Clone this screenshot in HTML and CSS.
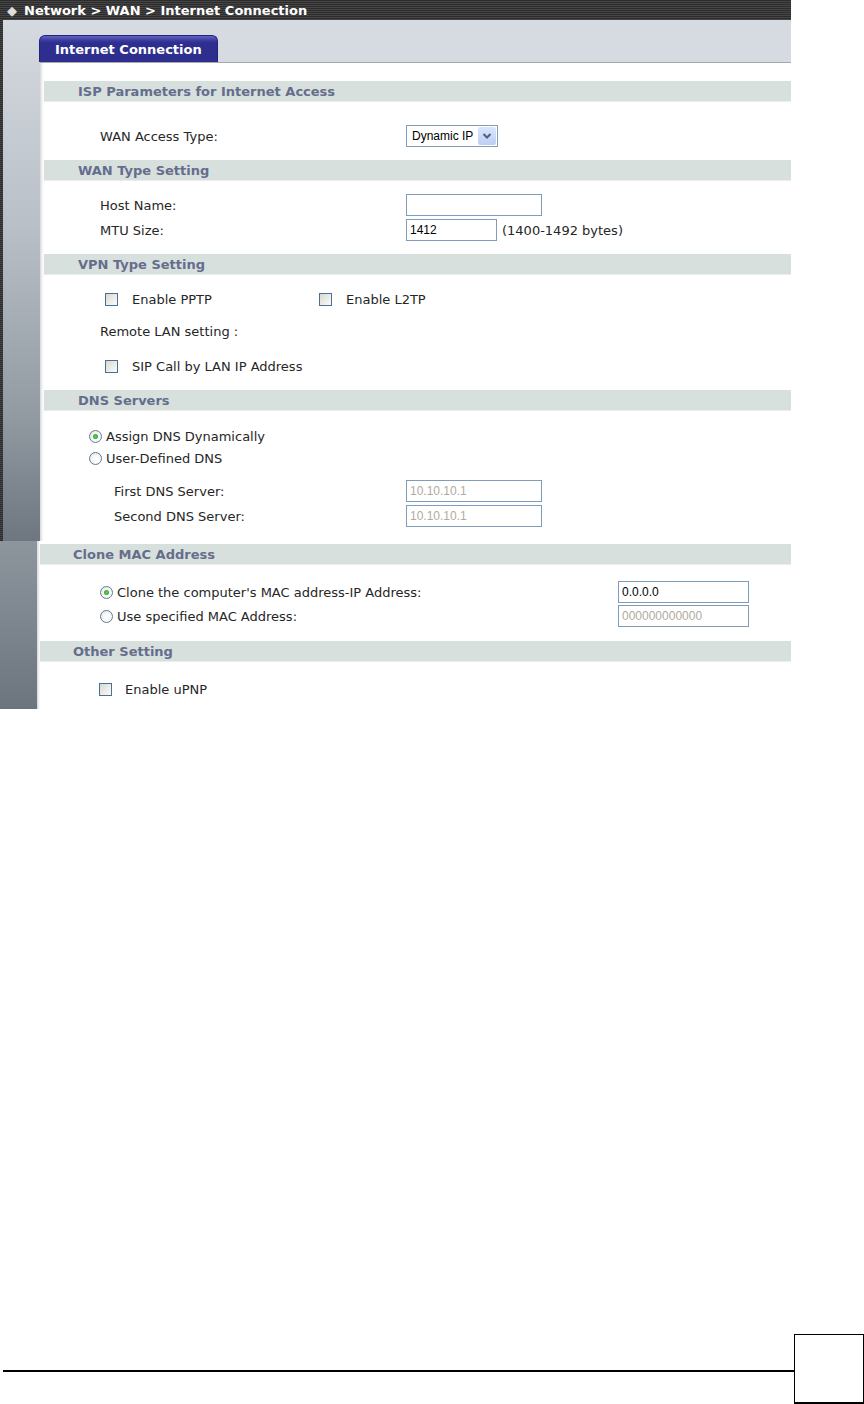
FILE: index.html
```html
<!DOCTYPE html>
<html lang="en">
<head>
    <meta charset="UTF-8">
    <title>Network - WAN - Internet Connection</title>
    <link rel="stylesheet" href="styles.css">
</head>
<body>
    <div class="shot">
        <div class="crumbs"><span class="crumbs-mark">&#9670;</span>Network &gt; WAN &gt; Internet Connection</div>
        <div class="frame">
            <div class="frame-edge"></div>
            <div class="frame-side"></div>
            <div class="tabs"><div class="tab">Internet Connection</div></div>
            <div class="content">
                <div class="sect-head">ISP Parameters for Internet Access</div>
                <div class="sect-body sect-isp">
                    <div class="row">
                        <span class="label">WAN Access Type:</span>
                        <div class="select">
                            <span class="select-text">Dynamic IP</span>
                            <span class="select-btn">
                                <svg width="10" height="8" viewBox="0 0 10 8"><path d="M1.5 2 L5 5.5 L8.5 2" fill="none" stroke="#4d5f82" stroke-width="2"/></svg>
                            </span>
                        </div>
                    </div>
                </div>

                <div class="sect-head">WAN Type Setting</div>
                <div class="sect-body sect-wan">
                    <div class="row">
                        <span class="label">Host Name:</span>
                        <span class="field field-wide"></span>
                    </div>
                    <div class="row">
                        <span class="label">MTU Size:</span>
                        <span class="field field-short">1412</span>
                        <span class="hint">(1400-1492 bytes)</span>
                    </div>
                </div>

                <div class="sect-head">VPN Type Setting</div>
                <div class="sect-body sect-vpn">
                    <div class="row">
                        <span class="check-item check-first"><span class="check"></span>Enable PPTP</span>
                        <span class="check-item"><span class="check"></span>Enable L2TP</span>
                    </div>
                    <div class="row">
                        <span class="label">Remote LAN setting :</span>
                    </div>
                    <div class="row row-sip">
                        <span class="check-item"><span class="check"></span>SIP Call by LAN IP Address</span>
                    </div>
                </div>

                <div class="sect-head">DNS Servers</div>
                <div class="sect-body sect-dns">
                    <div class="row row-radio">
                        <span class="radio radio-on"></span>Assign DNS Dynamically
                    </div>
                    <div class="row row-radio">
                        <span class="radio"></span>User-Defined DNS
                    </div>
                    <div class="row row-gap">
                        <span class="label label-sub">First DNS Server:</span>
                        <span class="field field-wide field-off">10.10.10.1</span>
                    </div>
                    <div class="row">
                        <span class="label label-sub">Second DNS Server:</span>
                        <span class="field field-wide field-off">10.10.10.1</span>
                    </div>
                </div>
            </div>
        </div>
    </div>

    <div class="shot shot-lower">
        <div class="frame-side frame-side-lower"></div>
        <div class="content content-lower">
            <div class="sect-head">Clone MAC Address</div>
            <div class="sect-body sect-mac">
                <div class="row row-radio">
                    <span class="radio-item"><span class="radio radio-on"></span>Clone the computer's MAC address-IP Address:</span>
                    <span class="field field-mac">0.0.0.0</span>
                </div>
                <div class="row row-radio">
                    <span class="radio-item"><span class="radio"></span>Use specified MAC Address:</span>
                    <span class="field field-mac field-off">000000000000</span>
                </div>
            </div>

            <div class="sect-head">Other Setting</div>
            <div class="sect-body sect-other">
                <div class="row">
                    <span class="check-item"><span class="check"></span>Enable uPNP</span>
                </div>
            </div>
        </div>
    </div>

    <footer class="page-foot">
        <div class="page-rule"></div>
        <div class="page-box"></div>
    </footer>
</body>
</html>
```

FILE: styles.css
```css
:root {
    --fonte: "DejaVu Sans", Verdana, sans-serif;
    --cabecalho: #d8e0de;
    --titulo: #656d8c;
    --borda-campo: #7f9db9;
    --texto: #262626;
}

html, body {
    margin: 0;
    padding: 0;
}

body {
    width: 864px;
    height: 1404px;
    display: flex;
    flex-direction: column;
    background-color: #fff;
    font-family: var(--fonte);
    font-size: 13px;
    color: var(--texto);
}

.shot {
    width: 791px;
}

/* barra do caminho */
.crumbs {
    height: 20px;
    display: flex;
    align-items: center;
    background: repeating-linear-gradient(to bottom, #2c2c2c 0, #2c2c2c 1px, #454545 1px, #454545 2px);
    color: #fff;
    font-weight: bold;
    font-size: 13px;
    white-space: nowrap;
}

.crumbs-mark {
    width: 13px;
    margin: 0 4px 0 7px;
    font-size: 13px;
    color: #ddd;
}

.frame {
    display: grid;
    grid-template-columns: 3px 37px 751px;
    grid-template-rows: 43px 478px;
}

.frame-edge {
    grid-row: 1 / 3;
    background: repeating-linear-gradient(to bottom, #2c2c2c 0, #2c2c2c 1px, #454545 1px, #454545 2px);
}

.frame-side {
    grid-row: 1 / 3;
    background: linear-gradient(to bottom, #d5dae0 0%, #b8bfc6 40%, #939ba3 75%, #6e7780 100%);
}

.tabs {
    display: flex;
    align-items: flex-end;
    background-color: #d5dbe1;
    border-bottom: 1px solid #a6a8ab;
}

.tab {
    width: 162px;
    height: 26px;
    margin-left: -1px;
    padding-left: 15px;
    display: flex;
    align-items: center;
    background: linear-gradient(to bottom, #6464c0 0, #3d3da4 4px, #2e2e8e 7px, #2e2e8e 100%);
    border: 1px solid #22227a;
    border-bottom: none;
    border-radius: 6px 6px 0 0;
    color: #fff;
    font-weight: bold;
    font-size: 13px;
}

.content {
    padding: 18px 0 0 4px;
    background: linear-gradient(to right, #d6d6d6 0, #f2f2f2 2px, #fff 4px);
}

.sect-head {
    height: 21px;
    padding: 1px 0 0 34px;
    display: flex;
    align-items: center;
    background-color: var(--cabecalho);
    border-bottom: 1px solid #e9eeec;
    box-sizing: border-box;
    color: var(--titulo);
    font-weight: bold;
    font-size: 13px;
}

.row {
    height: 22px;
    display: flex;
    align-items: center;
    white-space: nowrap;
}

.label {
    width: 306px;
    padding-left: 56px;
}

.label-sub {
    width: 292px;
    padding-left: 70px;
}

.sect-isp { padding: 23px 0 13px; }

.sect-wan {
    padding: 13px 0 13px;
    display: flex;
    flex-direction: column;
    gap: 3px;
}

.sect-vpn {
    padding: 13px 0 13px;
    display: flex;
    flex-direction: column;
    gap: 10px;
}

.row-sip { margin-top: 3px; }

.sect-dns { padding: 14px 0 0; }

.row-gap { margin-top: 11px; margin-bottom: 3px; }

/* campos */
.select {
    width: 90px;
    height: 20px;
    display: flex;
    align-items: center;
    justify-content: space-between;
    border: 1px solid var(--borda-campo);
    font-family: "Liberation Sans", Arial, sans-serif;
    font-size: 12px;
    color: #000;
}

.select-text { padding-left: 5px; }

.select-btn {
    width: 18px;
    height: 18px;
    margin-right: 1px;
    display: flex;
    align-items: center;
    justify-content: center;
    background: linear-gradient(to bottom, #dbe6fb, #bccef4);
    border-radius: 2px;
}

.field {
    height: 20px;
    display: flex;
    align-items: center;
    padding-left: 3px;
    border: 1px solid var(--borda-campo);
    box-sizing: content-box;
    font-family: "Liberation Sans", Arial, sans-serif;
    font-size: 12px;
    color: #000;
}

.field-wide { width: 131px; }
.field-short { width: 86px; }
.field-mac { width: 126px; }
.field-off { color: #b0ab9e; }

.hint { margin-left: 5px; }

/* caixas e radios */
.check-item {
    display: flex;
    align-items: center;
    padding-left: 61px;
}

.check-first { width: 153px; }

.check {
    width: 11px;
    height: 11px;
    margin-right: 14px;
    border: 1px solid #4c6f94;
    background: linear-gradient(135deg, #d9d9d3, #fbfbfa);
}

.row-radio { padding-left: 45px; }

.radio {
    width: 11px;
    height: 11px;
    margin-right: 4px;
    border: 1px solid #5f7c99;
    border-radius: 50%;
    background: radial-gradient(circle at 60% 60%, #fff 0, #fafaf8 40%, #dcdcd6 100%);
    display: flex;
    align-items: center;
    justify-content: center;
}

.radio-on::after {
    content: "";
    width: 5px;
    height: 5px;
    border-radius: 50%;
    background: radial-gradient(circle, #5fd25f, #1c9a1c);
}

/* segunda captura */
.shot-lower {
    display: grid;
    grid-template-columns: 37px 754px;
    height: 168px;
}

.frame-side-lower {
    grid-row: auto;
    background: linear-gradient(to bottom, #8d959d, #6c757e);
}

.content-lower {
    padding: 3px 0 0 3px;
    background: linear-gradient(to right, #d6d6d6 0, #f2f2f2 2px, #fff 3px);
}

.content-lower .sect-head { padding-left: 33px; }

.sect-mac {
    padding: 16px 0 14px;
    display: flex;
    flex-direction: column;
    gap: 2px;
}

.sect-mac .row-radio { padding-left: 60px; }

.radio-item {
    width: 518px;
    display: flex;
    align-items: center;
}

.sect-other { padding: 16px 0 0; }

.sect-other .check-item { padding-left: 59px; }
.sect-other .check { margin-right: 13px; }

/* rodapé da página */
.page-foot {
    margin-top: auto;
    height: 70px;
    display: flex;
    align-items: flex-start;
    padding-left: 3px;
}

.page-rule {
    width: 791px;
    height: 2px;
    margin-top: 36px;
    background-color: #000;
}

.page-box {
    width: 68px;
    height: 67px;
    border: 1px solid #000;
    border-bottom-width: 2px;
}
```
